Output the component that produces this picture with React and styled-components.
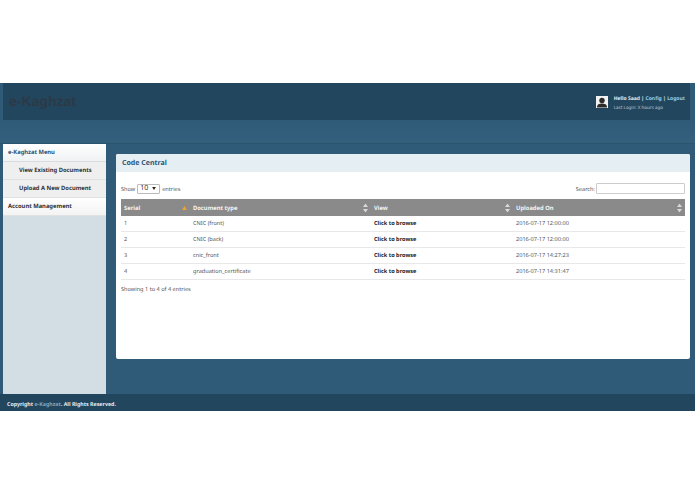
import React from 'react';
import styled, { createGlobalStyle } from 'styled-components';

const GlobalStyle = createGlobalStyle`
  html, body {
    margin: 0;
    padding: 0;
    background: #fff;
  }
  body {
    font-family: "Noto Sans", "Open Sans", sans-serif;
    font-size: 5.6px;
    color: #444;
    text-rendering: geometricPrecision;
  }
`;

const rows = [
  { serial: 1, type: 'CNIC (front)', date: '2016-07-17 12:00:00' },
  { serial: 2, type: 'CNIC (back)', date: '2016-07-17 12:00:00' },
  { serial: 3, type: 'cnic_front', date: '2016-07-17 14:27:23' },
  { serial: 4, type: 'graduation_certificate', date: '2016-07-17 14:31:47' },
];

function SortIcon({ active }) {
  if (active) {
    return (
      <SortHolder>
        <svg width="5" height="4" viewBox="0 0 6 5">
          <path d="M3 0 L6 5 L0 5 Z" fill="#f0a030" />
        </svg>
      </SortHolder>
    );
  }
  return (
    <SortHolder>
      <svg width="5" height="9" viewBox="0 0 5 9">
        <path d="M2.5 0 L5 3.6 L0 3.6 Z M2.5 9 L5 5.4 L0 5.4 Z" fill="#d8d8d8" />
      </svg>
    </SortHolder>
  );
}

function App() {
  return (
    <Page>
      <GlobalStyle />
      <Shell>
        <Header>
          <Brand>e-Kaghzat</Brand>
          <UserBox>
            <Avatar>
              <svg width="12" height="12" viewBox="0 0 12 12">
                <rect width="12" height="12" fill="#f2f2f2" />
                <circle cx="6" cy="4.4" r="2.7" fill="#2b2b2b" />
                <path d="M1 11.5 C1 8.4 3.4 7.6 6 7.6 C8.6 7.6 11 8.4 11 11.5 Z" fill="#2b2b2b" />
              </svg>
            </Avatar>
            <UserText>
              <Hello>
                Hello Saad | <TopLink>Config</TopLink> | <TopLink>Logout</TopLink>
              </Hello>
              <LastLogin>Last Login: X hours ago</LastLogin>
            </UserText>
          </UserBox>
        </Header>
        <SubBar />
        <Body>
          <Sidebar>
            <MenuTitle>e-Kaghzat Menu</MenuTitle>
            <SubItem>View Existing Documents</SubItem>
            <SubItem>Upload A New Document</SubItem>
            <MenuItem>Account Management</MenuItem>
          </Sidebar>
          <Card>
            <CardHeader>Code Central</CardHeader>
            <CardBody>
              <Controls>
                <LengthLabel>
                  Show
                  <FakeSelect>
                    <span>10</span>
                    <svg width="4" height="3" viewBox="0 0 5 4">
                      <path d="M0 0 L5 0 L2.5 4 Z" fill="#222" />
                    </svg>
                  </FakeSelect>
                  entries
                </LengthLabel>
                <SearchLabel>
                  Search:
                  <SearchInput />
                </SearchLabel>
              </Controls>
              <Table>
                <colgroup>
                  <col style={{ width: 69 }} />
                  <col style={{ width: 181 }} />
                  <col style={{ width: 142 }} />
                  <col />
                </colgroup>
                <thead>
                  <tr>
                    <Th>Serial<SortIcon active /></Th>
                    <Th>Document type<SortIcon /></Th>
                    <Th>View<SortIcon /></Th>
                    <Th>Uploaded On<SortIcon /></Th>
                  </tr>
                </thead>
                <tbody>
                  {rows.map((row) => (
                    <tr key={row.serial}>
                      <Td>{row.serial}</Td>
                      <Td>{row.type}</Td>
                      <Td><BrowseLink>Click to browse</BrowseLink></Td>
                      <Td>{row.date}</Td>
                    </tr>
                  ))}
                </tbody>
              </Table>
              <TableInfo>Showing 1 to 4 of 4 entries</TableInfo>
            </CardBody>
          </Card>
        </Body>
        <Footer>
          Copyright <FooterBrand>e-Kaghzat</FooterBrand>. All Rights Reserved.
        </Footer>
      </Shell>
    </Page>
  );
}

const Page = styled.div`
  width: 695px;
  height: 494px;
  padding-top: 83px;
  box-sizing: border-box;
  overflow: hidden;
`;

const Shell = styled.div`
  height: 328px;
  display: flex;
  flex-direction: column;
  background: #2f5b78;
`;

const Header = styled.header`
  height: 37px;
  margin: 0 5px 0 3px;
  padding: 0 5px 0 6px;
  flex: none;
  display: flex;
  align-items: center;
  justify-content: space-between;
  background: #23465f;
`;

const SubBar = styled.div`
  height: 23px;
  flex: none;
  background: linear-gradient(#2f5b78, #34607d);
  border-bottom: 1px solid #2b546f;
`;

const Brand = styled.div`
  font-family: "Liberation Sans", Arial, sans-serif;
  font-size: 14px;
  font-weight: bold;
  color: #2b3a44;
  margin-top: -1px;
`;

const UserBox = styled.div`
  display: flex;
  align-items: center;
  gap: 6px;
`;

const Avatar = styled.div`
  width: 12px;
  height: 12px;
  display: flex;
`;

const UserText = styled.div`
  display: flex;
  flex-direction: column;
  gap: 2px;
  padding-top: 2px;
`;

const Hello = styled.div`
  font-size: 5.05px;
  line-height: 8px;
  font-weight: bold;
  color: #e4ecf1;
  white-space: nowrap;
`;

const TopLink = styled.span`
  color: #8fd0ee;
`;

const LastLogin = styled.div`
  font-size: 4.5px;
  line-height: 6px;
  color: #b9c9d4;
  white-space: nowrap;
`;

const Body = styled.div`
  flex: 1;
  display: flex;
  align-items: flex-start;
  padding: 0 5px 0 3px;
  gap: 10px;
  min-height: 0;
`;

const Sidebar = styled.nav`
  width: 103px;
  height: 250px;
  flex: none;
  background: #d2dee4;
`;

const MenuTitle = styled.div`
  height: 18px;
  line-height: 17px;
  padding-left: 5px;
  box-sizing: border-box;
  font-size: 5.8px;
  font-weight: bold;
  color: #2c5377;
  background: linear-gradient(#ffffff, #f0f2f3);
  border-bottom: 1px solid #d8dcde;
`;

const SubItem = styled.div`
  height: 18px;
  line-height: 17px;
  padding-left: 16px;
  box-sizing: border-box;
  font-size: 5.8px;
  font-weight: bold;
  color: #333;
  background: #efefef;
  border-bottom: 1px solid #dfe1e2;
`;

const MenuItem = styled.div`
  height: 18px;
  line-height: 17px;
  padding-left: 5px;
  box-sizing: border-box;
  font-size: 5.8px;
  font-weight: bold;
  color: #333;
  background: linear-gradient(#ffffff, #f3f3f3);
  border-bottom: 1px solid #dfe1e2;
`;

const Card = styled.main`
  flex: 1;
  height: 205px;
  margin-top: 10px;
  background: #fff;
  border-radius: 2px;
`;

const CardHeader = styled.div`
  height: 18px;
  line-height: 19px;
  padding-left: 6px;
  font-size: 7px;
  font-weight: bold;
  color: #2c5377;
  background: #e5eef2;
  border-radius: 2px 2px 0 0;
`;

const CardBody = styled.div`
  padding: 8px 5px 0 5px;
`;

const Controls = styled.div`
  height: 17px;
  display: flex;
  align-items: center;
  justify-content: space-between;
  margin-bottom: 2px;
`;

const LengthLabel = styled.div`
  display: flex;
  align-items: center;
  gap: 2px;
  color: #555;
`;

const FakeSelect = styled.div`
  width: 23px;
  height: 10px;
  padding: 0 3px 0 2px;
  box-sizing: border-box;
  display: flex;
  align-items: center;
  justify-content: space-between;
  font-size: 7px;
  color: #333;
  background: #fff;
  border: 1px solid #bbb;
  border-radius: 1px;
`;

const SearchLabel = styled.div`
  display: flex;
  align-items: center;
  gap: 1px;
  color: #555;
`;

const SearchInput = styled.div`
  width: 89px;
  height: 11px;
  box-sizing: border-box;
  background: #fff;
  border: 1px solid #ccc;
  border-radius: 1px;
`;

const Table = styled.table`
  width: 564px;
  border-collapse: collapse;
  table-layout: fixed;
`;

const Th = styled.th`
  position: relative;
  height: 17px;
  padding: 0 2px 0 3px;
  text-align: left;
  font-size: 5.8px;
  font-weight: bold;
  color: #f4f4f4;
  background: #8a8a8a;
`;

const SortHolder = styled.span`
  position: absolute;
  right: 3px;
  top: 50%;
  transform: translateY(-50%);
  display: flex;
`;

const Td = styled.td`
  height: 14px;
  padding: 0 2px 1px 3px;
  font-size: 5.6px;
  color: #555;
  border-bottom: 1px solid #e8e8e8;
`;

const BrowseLink = styled.span`
  font-weight: bold;
  color: #222;
`;

const TableInfo = styled.div`
  margin-top: 5px;
  color: #555;
`;

const Footer = styled.footer`
  height: 17px;
  flex: none;
  padding-left: 7px;
  line-height: 20px;
  font-size: 5.3px;
  font-weight: bold;
  color: #e4ecf1;
  background: #23465f;
`;

const FooterBrand = styled.span`
  color: #7fa6c0;
`;

export default App;
